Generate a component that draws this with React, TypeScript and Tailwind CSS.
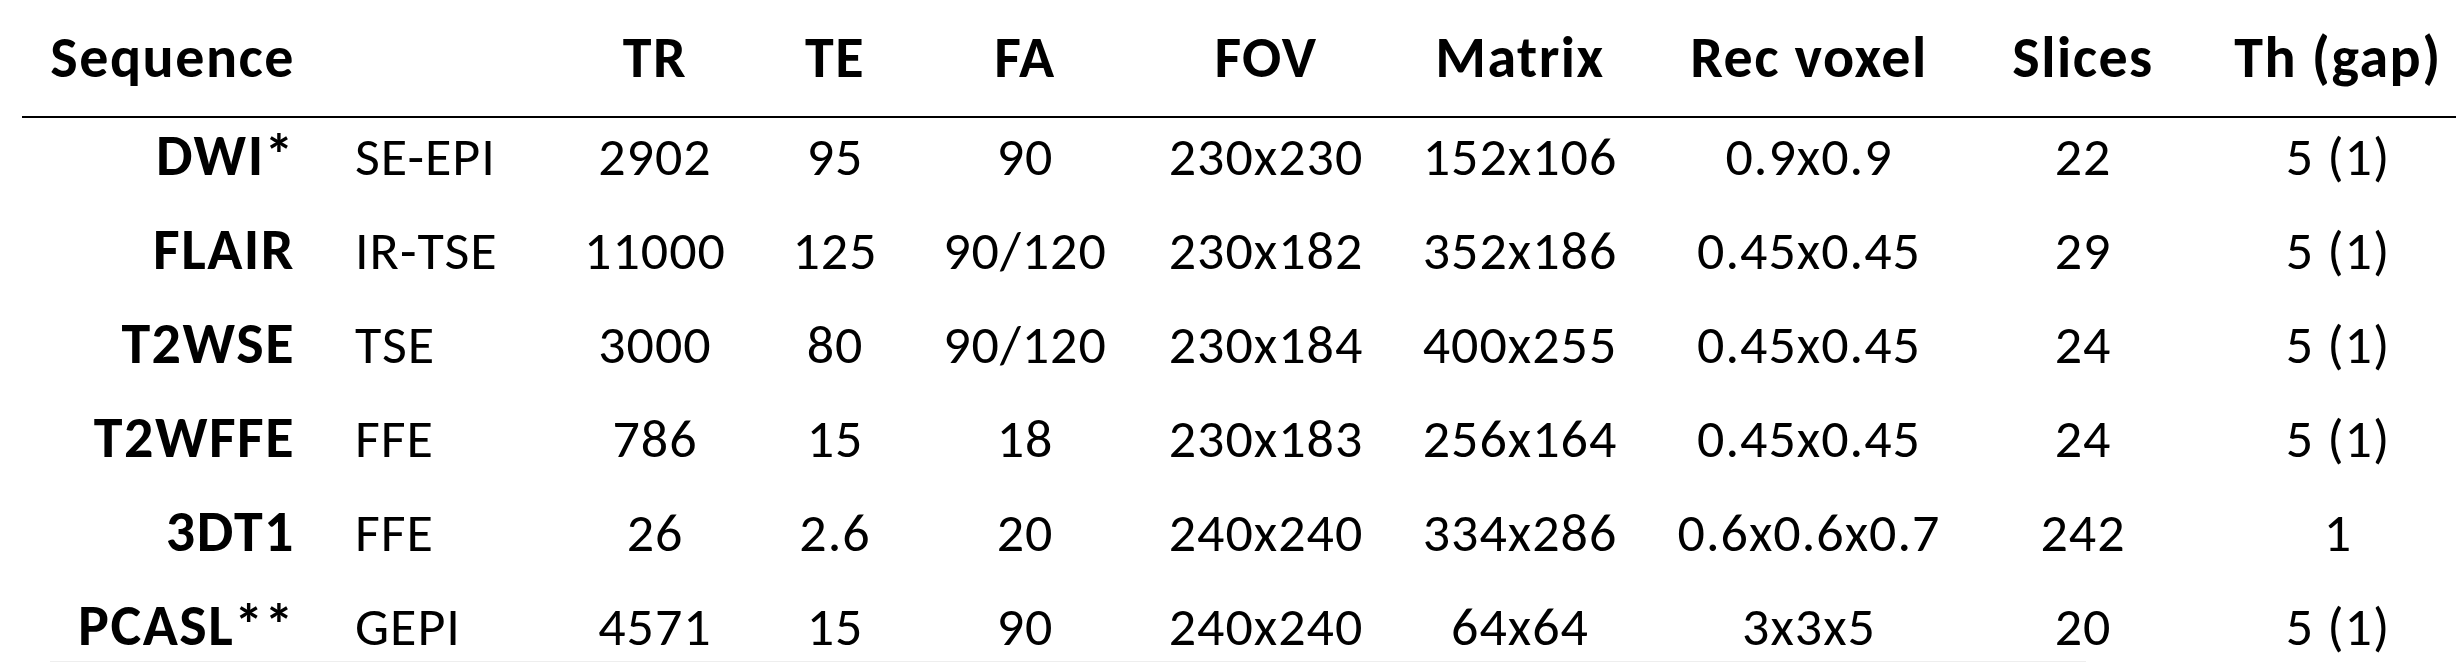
import React from "react";

const rows: string[][] = [
  ["DWI*", "SE-EPI", "2902", "95", "90", "230x230", "152x106", "0.9x0.9", "22", "5 (1)"],
  ["FLAIR", "IR-TSE", "11000", "125", "90/120", "230x182", "352x186", "0.45x0.45", "29", "5 (1)"],
  ["T2WSE", "TSE", "3000", "80", "90/120", "230x184", "400x255", "0.45x0.45", "24", "5 (1)"],
  ["T2WFFE", "FFE", "786", "15", "18", "230x183", "256x164", "0.45x0.45", "24", "5 (1)"],
  ["3DT1", "FFE", "26", "2.6", "20", "240x240", "334x286", "0.6x0.6x0.7", "242", "1"],
  ["PCASL**", "GEPI", "4571", "15", "90", "240x240", "64x64", "3x3x5", "20", "5 (1)"],
];

const headers = ["TR", "TE", "FA", "FOV", "Matrix", "Rec voxel", "Slices", "Th (gap)"];

const grid =
  "grid grid-cols-[325px_240px_180px_180px_200px_282px_226px_352px_235px_236px] items-baseline";

export default function App() {
  return (
    <div className="w-[2456px] h-[662px] overflow-hidden bg-white text-black font-['Carlito','Lato',sans-serif]">
      {/* header */}
      <div className={`${grid} h-[116px] pt-[27px] text-[58px] leading-[62px] font-bold tracking-[1.5px]`}>
        <div className="text-right pr-[30px] whitespace-nowrap">Sequence</div>
        <div />
        {headers.map((h, i) => (
          <div
            key={h}
            className={`text-center whitespace-nowrap ${i === 6 ? "pr-[39px]" : ""}`}
          >
            {h}
          </div>
        ))}
      </div>
      <div className="ml-[22px] h-[2px] bg-black" />
      {/* body */}
      <div>
        {rows.map((r, ri) => (
          <div
            key={ri}
            className={`${grid} ${ri === rows.length - 1 ? "h-[73px]" : "h-[94px]"} pt-[5px] text-[54px] leading-[68px] tracking-[1px]`}
          >
            <div className="text-right pr-[30px] font-bold text-[58px] leading-[64px] tracking-[1.5px] whitespace-nowrap">
              {r[0]}
            </div>
            <div className="pl-[30px] whitespace-nowrap">{r[1]}</div>
            {r.slice(2).map((c, ci) => (
              <div
                key={ci}
                className={`text-center whitespace-nowrap ${ci === 6 ? "pr-[39px]" : ""}`}
              >
                {c}
              </div>
            ))}
          </div>
        ))}
        <div className="ml-[50px] w-[2036px] h-px bg-[#eeeeee]" />
      </div>
    </div>
  );
}
